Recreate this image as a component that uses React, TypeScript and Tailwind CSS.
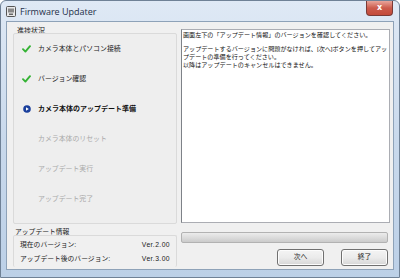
import React from 'react';

const jp = "font-['Liberation_Sans','Noto_Sans_CJK_JP',sans-serif]";

type Step = { label: string; state: 'done' | 'current' | 'todo' };

const steps: Step[] = [
  { label: 'カメラ本体とパソコン接続', state: 'done' },
  { label: 'バージョン確認', state: 'done' },
  { label: 'カメラ本体のアップデート準備', state: 'current' },
  { label: 'カメラ本体のリセット', state: 'todo' },
  { label: 'アップデート実行', state: 'todo' },
  { label: 'アップデート完了', state: 'todo' },
];

const Check = () => (
  <svg width="9" height="8" viewBox="0 0 9 8">
    <path d="M1 4.2 L3.4 6.6 L8 1.2" fill="none" stroke="#35b335" strokeWidth="1.9" strokeLinecap="round" strokeLinejoin="round" />
  </svg>
);

const Play = () => (
  <svg width="8" height="8" viewBox="0 0 8 8">
    <circle cx="4" cy="4" r="3.8" fill="#1a3f9c" />
    <path d="M3 2.2 L5.8 4 L3 5.8 Z" fill="#fff" />
  </svg>
);

const StepRow = ({ step }: { step: Step }) => (
  <div className="flex h-[30px] items-center">
    <div className="flex w-[24px] justify-center pl-[1px]">
      {step.state === 'done' && <Check />}
      {step.state === 'current' && <Play />}
    </div>
    <span
      className={
        step.state === 'current'
          ? 'text-[7px] font-bold text-[#111]'
          : step.state === 'done'
          ? 'text-[6.9px] text-[#222]'
          : 'text-[6.9px] text-[#a9a9a9]'
      }
    >
      {step.label}
    </span>
  </div>
);

const Win7Button = ({ children }: { children: React.ReactNode }) => (
  <button className="flex h-[17px] w-[47px] items-center justify-center rounded-[3px] border border-[#707070] bg-gradient-to-b from-[#f4f4f4] via-[#ebebeb] to-[#d6d6d6] text-[6.8px] text-[#222] shadow-[inset_0_0_0_1px_#fcfcfc]">
    {children}
  </button>
);

export default function App() {
  return (
    <div className={`${jp} flex h-[278px] w-[400px] flex-col rounded-t-[6px] border border-[#6f8196] bg-gradient-to-b from-[#dfe9f5] via-[#c9d9ec] to-[#bcd0e7]`}>
      {/* title bar */}
      <div className="flex h-[20px] items-start">
        <div className="flex items-center gap-[4px] pl-[5px] pt-[4px]">
          <svg width="10" height="11" viewBox="0 0 10 11">
            <rect x="0.5" y="0.5" width="9" height="10" rx="1" fill="#e8e8e8" stroke="#555" />
            <rect x="2" y="2.5" width="6" height="4" fill="#888" />
            <rect x="3" y="7.5" width="4" height="1.5" fill="#666" />
          </svg>
          <span className="font-['Open_Sans','Liberation_Sans',sans-serif] text-[9px] text-[#1e3048]">Firmware Updater</span>
        </div>
        <div className="ml-auto mr-[6px] flex h-[15px] w-[27px] items-center justify-center rounded-b-[4px] border border-t-0 border-[#7a3a36] bg-gradient-to-b from-[#e8a59b] via-[#cc5b4c] to-[#c34a3a]">
          <span className="font-['DejaVu_Sans',sans-serif] text-[8px] font-bold leading-none text-white">x</span>
        </div>
      </div>

      {/* client area */}
      <div className="mx-[5px] flex h-[249px] gap-[4px] border border-[#8ea2b8] bg-[#f0f0f0] pl-[6px] pr-[3px]">
        {/* left column */}
        <div className="flex w-[164px] flex-col">
          <div className="mt-[5px] pl-[4px] text-[7px] leading-[8px] text-[#222]">進捗状況</div>
          <div className="-mt-[2px] flex h-[191px] flex-col rounded-[2px] border border-[#dadada] bg-[#eeeeee]">
            {steps.map((s) => (
              <StepRow key={s.label} step={s} />
            ))}
          </div>
          <div className="mt-[4px] pl-[2px] text-[6.8px] leading-[8px] text-[#222]">アップデート情報</div>
          <div className="-mt-[1px] flex h-[32px] flex-col justify-center gap-[6px] rounded-[2px] border border-b-0 border-[#dadada] px-[6px] text-[6.8px] leading-[8px] text-[#222]">
            <div className="flex justify-between">
              <span>現在のバージョン:</span>
              <span className="tracking-[0.4px]">Ver.2.00</span>
            </div>
            <div className="flex justify-between">
              <span>アップデート後のバージョン:</span>
              <span className="tracking-[0.4px]">Ver.3.00</span>
            </div>
          </div>
        </div>

        {/* right column */}
        <div className="flex flex-1 flex-col">
          <div className="mt-[7px] h-[194px] border border-[#abadb3] border-l-[#7e8288] bg-white px-[1px] pt-[1px] text-[6.1px] leading-[8px] text-[#111]">
            <p>画面左下の「アップデート情報」のバージョンを確認してください。</p>
            <p className="mt-[6px]">
              アップデートするバージョンに問題がなければ、[次へ]ボタンを押してアップデートの準備を行ってください。
              <br />
              以降はアップデートのキャンセルはできません。
            </p>
          </div>
          <div className="mt-[9px] mr-[2px] h-[11px] rounded-[2px] border border-[#b2b2b2] bg-gradient-to-b from-[#ececec] via-[#dcdcdc] to-[#cbcbcb]" />
          <div className="mt-[6px] flex justify-end gap-[17px] pr-[2px]">
            <Win7Button>次へ</Win7Button>
            <Win7Button>終了</Win7Button>
          </div>
        </div>
      </div>
    </div>
  );
}
